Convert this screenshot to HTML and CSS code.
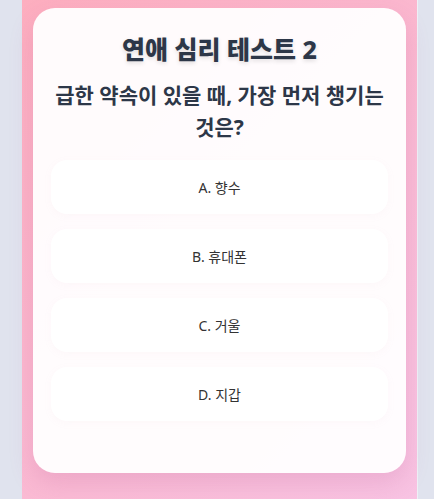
FILE: index.html
```html
<!DOCTYPE html>
<html lang="ko">
<head>
<meta charset="utf-8">
<title>연애 심리 테스트 2</title>
<link rel="stylesheet" href="styles.css">
</head>
<body>
<div class="frame">
  <div class="card">
    <h1 class="title">연애 심리 테스트 2</h1>
    <h2 class="question">급한 약속이 있을 때, 가장 먼저 챙기는 것은?</h2>
    <div class="options">
      <button class="option">A. 향수</button>
      <button class="option">B. 휴대폰</button>
      <button class="option">C. 거울</button>
      <button class="option">D. 지갑</button>
    </div>
  </div>
</div>
</body>
</html>
```

FILE: styles.css
```css
html, body {
  margin: 0;
  padding: 0;
}
body {
  background: #e0e3ee;
  font-family: "Noto Sans", "Noto Sans CJK KR", sans-serif;
  min-height: 499px;
}
.frame {
  width: 396px;
  margin-left: 22px;
  min-height: 520px;
  box-sizing: border-box;
  padding: 8px 11px 40px 11px;
  background: linear-gradient(135deg, #fdaebf 0%, #f8c4e4 100%);
  border-right: 1px solid #eef0f6;
}
.card {
  background: rgba(255, 255, 255, 0.95);
  border-radius: 22px;
  padding: 25px 18px 52px;
  box-shadow: 0 10px 24px rgba(180, 80, 140, 0.18);
  text-align: center;
}
.title {
  margin: 0;
  font-size: 25px;
  line-height: 32px;
  font-weight: 800;
  color: #2d3748;
  text-shadow: 0 2px 4px rgba(0, 0, 0, 0.12);
}
.question {
  margin: 14px 0 0;
  font-size: 21px;
  line-height: 32px;
  font-weight: 700;
  color: #2d3748;
  padding: 0 4px;
}
.options {
  margin-top: 17px;
  display: flex;
  flex-direction: column;
  gap: 15px;
}
.option {
  height: 54px;
  border: none;
  border-radius: 16px;
  background: #ffffff;
  box-shadow: 0 2px 8px rgba(220, 150, 180, 0.05);
  font-family: "Noto Sans", "Noto Sans CJK KR", sans-serif;
  font-size: 14px;
  color: #333333;
  padding: 0;
}
```
